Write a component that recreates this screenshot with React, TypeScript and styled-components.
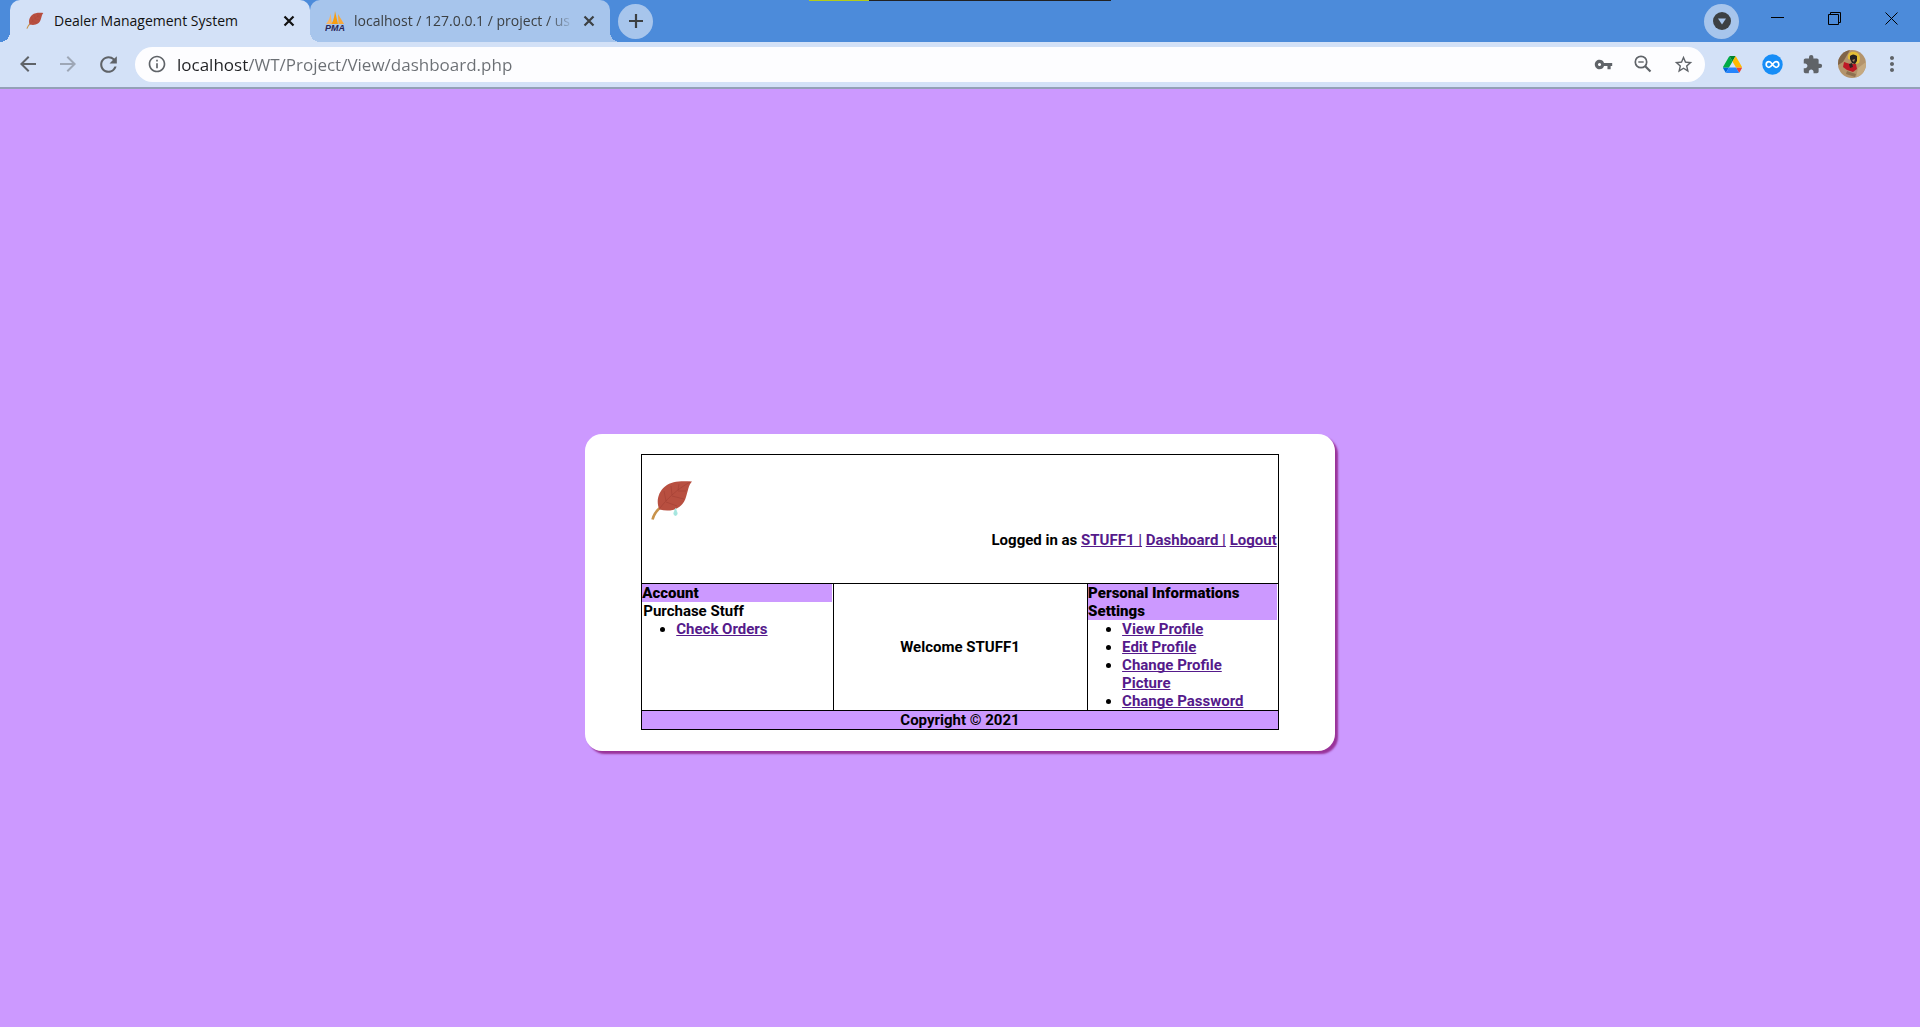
import React from "react";
import styled, { createGlobalStyle } from "styled-components";
import {
  MdArrowBack,
  MdArrowForward,
  MdExtension,
  MdInfoOutline,
  MdMoreVert,
  MdRefresh,
  MdStarBorder,
  MdVpnKey,
} from "react-icons/md";

const colors = {
  frame: "#4c8bda",
  tabActive: "#d3e1f7",
  tabIdle: "#a7c5ec",
  icon: "#5f6368",
  page: "#cc99ff",
  link: "#551a8b",
};

const GlobalStyle = createGlobalStyle`
  *, *::before, *::after { box-sizing: border-box; }
  body { margin: 0; background: ${colors.page}; }
  button { border: 0; padding: 0; background: none; color: inherit; font: inherit; }
`;

const Shell = styled.div`
  display: flex;
  flex-direction: column;
  min-height: 100vh;
`;

/* ---------- browser frame ---------- */

const TabStrip = styled.header`
  position: relative;
  display: flex;
  align-items: stretch;
  height: 42px;
  padding-left: 10px;
  background: ${colors.frame};
  font-family: "Open Sans", "Noto Sans", sans-serif;
`;

const LoadStrip = styled.div`
  position: absolute;
  top: 0;
  left: 0;
  right: 0;
  width: 302px;
  height: 1px;
  margin: 0 auto;
  background: linear-gradient(90deg, #b5cc18 60px, #222 60px);
`;

const Tab = styled.div<{ $active?: boolean }>`
  position: relative;
  z-index: ${(p) => (p.$active ? 1 : 0)};
  display: flex;
  align-items: center;
  width: 300px;
  padding: 0 11px 0 15px;
  border-radius: 10px 10px 0 0;
  background: ${(p) => (p.$active ? colors.tabActive : colors.tabIdle)};
  color: ${(p) => (p.$active ? "#111" : "#3c4043")};

  &::before,
  &::after {
    content: "";
    position: absolute;
    bottom: 0;
    width: 10px;
    height: 10px;
  }
  &::before {
    right: 100%;
    background: radial-gradient(circle at 0 0, transparent 10px, ${(p) => (p.$active ? colors.tabActive : colors.tabIdle)} 10px);
  }
  &::after {
    left: 100%;
    background: radial-gradient(circle at 100% 0, transparent 10px, ${(p) => (p.$active ? colors.tabActive : colors.tabIdle)} 10px);
  }
`;

const TabTitle = styled.span<{ $fade?: boolean }>`
  flex: 1;
  min-width: 0;
  margin: 0 5px 0 9px;
  overflow: hidden;
  white-space: nowrap;
  font-size: 14px;
  line-height: 20px;
  ${(p) => p.$fade && "mask-image: linear-gradient(90deg, #000 calc(100% - 26px), transparent);"}
`;

const TabClose = styled.button`
  display: grid;
  place-items: center;
  width: 20px;
  height: 20px;
`;

const RoundButton = styled.button`
  display: grid;
  place-items: center;
  align-self: center;
  width: 35px;
  height: 35px;
  border-radius: 50%;
  background: ${colors.tabIdle};
`;

const NewTab = styled(RoundButton)`
  margin-left: 8px;
`;

const WindowButtons = styled.div`
  display: flex;
  align-items: stretch;
  margin-left: auto;
`;

const WindowButton = styled.button`
  display: grid;
  place-items: center;
  width: 57px;
  height: 37px;
  svg { fill: none; stroke: #000; }
`;

const WindowGroup = styled.div`
  display: flex;
  margin-left: 10px;
`;

const Toolbar = styled.nav`
  display: flex;
  align-items: center;
  height: 47px;
  padding: 1px 8px 2px;
  border-bottom: 2px solid #93a0b8;
  background: ${colors.tabActive};
  color: ${colors.icon};
`;

const ToolButton = styled.button<{ $muted?: boolean }>`
  display: grid;
  place-items: center;
  flex: none;
  width: 40px;
  height: 35px;
  opacity: ${(p) => (p.$muted ? 0.45 : 1)};
`;

const AddressBar = styled.form`
  display: flex;
  flex: 1;
  align-items: center;
  min-width: 0;
  height: 35px;
  margin: 0 7px;
  padding: 0 2px;
  border-radius: 18px;
  background: #fdfdff;
`;

const AddressInput = styled.input`
  flex: 1;
  min-width: 0;
  height: 35px;
  padding: 0;
  border: 0;
  outline: 0;
  background: linear-gradient(90deg, #202124 71px, #6b6f74 71px);
  background-clip: text;
  -webkit-background-clip: text;
  color: transparent;
  font: 17px "Open Sans", "Noto Sans", sans-serif;
`;

/* ---------- dashboard page ---------- */

const Page = styled.main`
  display: flex;
  flex: 1;
  align-items: center;
  justify-content: center;
  padding-top: 69px;
  background: ${colors.page};
  color: #000;
  font: 700 15px/18px Roboto, "Liberation Sans", sans-serif;
`;

const Card = styled.section`
  display: flex;
  justify-content: center;
  width: 750px;
  max-width: 100%;
  padding: 20px 0 21px;
  border-radius: 17px;
  background: #fff;
  box-shadow: 3px 3px 2px #993399;
`;

const Frame = styled.div`
  width: 85%;
  border: 1px solid #000;
`;

const Banner = styled.header`
  display: flex;
  flex-direction: column;
  gap: 6px;
  padding: 22px 1px 34px 6px;
`;

const Session = styled.p`
  margin: 0;
  text-align: right;
`;

const Columns = styled.div`
  display: grid;
  grid-template-columns: 3fr 4fr 3fr;
  border: solid #000;
  border-width: 1px 0;
`;

const Column = styled.section`
  padding-right: 1px;
  & + & { border-left: 1px solid #000; }
`;

const Heading = styled.h2`
  margin: 0;
  background: ${colors.page};
  font: inherit;
  font-weight: 900;
`;

const Label = styled.p`
  margin: 0;
  padding-left: 1px;
`;

const Menu = styled.ul`
  margin: 0;
  padding: 0 16px 0 34px;
`;

const Link = styled.a`
  color: ${colors.link};
  text-decoration: underline;
  text-decoration-skip-ink: none;
`;

const Welcome = styled(Column)`
  display: grid;
  place-items: center;
`;

const Footer = styled.footer`
  background: ${colors.page};
  text-align: center;
`;

const Leaf = ({ size, drop }: { size: number; drop?: boolean }) => (
  <svg width={size} height={size} viewBox="0 0 48 48" aria-hidden="true">
    <path d="M4.500 42.500C6 37 9 33 13 30" fill="none" stroke="#c8924a" strokeWidth="2.600" />
    <path d="M11.500 32.500C8 26 9.500 15.500 17 9.500C24 4 32 4 44 4.500C40.500 8 40 14 38 20C35 31 24 36 11.500 32.500Z" fill="#b84f40" />
    <path d="M12 31C19 22 28 13 42 5M18 24L16 14M24 18L23 9M30 13L31 7M18 25L29 29M24 19L36 22M30 14L38 14" fill="none" stroke="#9c3b30" strokeWidth="0.800" opacity="0.600" />
    {drop && <path d="M27.500 31.500C27 34 25.500 35.500 26 37.500Q27.500 39.500 29 37.500C29.500 35.500 28 34 27.500 31.500Z" fill="#a5e6df" stroke="#a5e6df" />}
  </svg>
);

const CloseMark = () => (
  <svg width="12" height="12" viewBox="0 0 12 12" aria-hidden="true">
    <path d="M1.500 1.500L10.500 10.500M10.500 1.500L1.500 10.500" stroke="currentColor" strokeWidth="2.200" />
  </svg>
);

const ZoomOutMark = () => (
  <svg width="18" height="18" viewBox="0 0 18 18" fill="none" stroke="currentColor" aria-hidden="true">
    <circle cx="7" cy="7" r="5.700" strokeWidth="1.700" />
    <path d="M11.200 11.200L16.500 16.500" strokeWidth="2.200" />
    <path d="M4.300 7H9.700" strokeWidth="1.400" />
  </svg>
);

const PmaLogo = () => (
  <svg width="20" height="20" viewBox="0 0 20 20" aria-hidden="true">
    <path d="M1 13C4 10 5 6 5.500 2.500L7 13Z" fill="#f7b565" />
    <path d="M6.500 13C9 9 9.500 4 10 0L13 13Z" fill="#f89c0e" />
    <path d="M13 3L19 13H13.500Z" fill="#f7a93b" />
    <text x="10" y="19.500" textAnchor="middle" fontFamily="Liberation Sans, sans-serif" fontSize="9" fontWeight="700" fontStyle="italic" fill="#27275c">PMA</text>
  </svg>
);

const DriveLogo = () => (
  <svg width="19" height="17" viewBox="0 0 87.300 78" aria-hidden="true">
    <path d="m6.600 66.850 3.850 6.650c.8 1.400 1.950 2.500 3.300 3.300l13.750-23.800h-27.500c0 1.550.4 3.100 1.200 4.500z" fill="#0066da" />
    <path d="m43.650 25-13.750-23.800c-1.350.8-2.500 1.900-3.300 3.300l-25.400 44a9.060 9.060 0 0 0-1.200 4.500h27.500z" fill="#00ac47" />
    <path d="m73.550 76.800c1.350-.8 2.500-1.900 3.300-3.300l1.600-2.750 7.650-13.250c.8-1.400 1.200-2.950 1.200-4.500h-27.500l5.850 11.500z" fill="#ea4335" />
    <path d="m43.650 25 13.750-23.800c-1.350-.8-2.900-1.200-4.500-1.200h-18.500c-1.600 0-3.150.45-4.500 1.200z" fill="#00832d" />
    <path d="m59.800 53h-32.300l-13.750 23.800c1.350.8 2.900 1.200 4.500 1.200h50.800c1.600 0 3.150-.45 4.500-1.200z" fill="#2684fc" />
    <path d="m73.400 26.500-12.700-22c-.8-1.400-1.950-2.500-3.300-3.300l-13.750 23.800 16.150 28h27.450c0-1.550-.4-3.100-1.200-4.500z" fill="#ffba00" />
  </svg>
);

const InfinityLogo = () => (
  <svg width="21" height="21" viewBox="0 0 21 21" aria-hidden="true">
    <circle cx="10.500" cy="10.500" r="10.200" fill="#168df7" />
    <path d="M10.500 10.500C9 8.500 8.200 7.700 7 7.700A2.800 2.800 0 0 0 7 13.300C8.200 13.300 9 12.500 10.500 10.500S12.800 7.700 14 7.700A2.800 2.800 0 0 1 14 13.300C12.800 13.300 12 12.500 10.500 10.500Z" fill="none" stroke="#fff" strokeWidth="1.700" />
  </svg>
);

const Avatar = () => (
  <svg width="28" height="28" viewBox="0 0 28 28" aria-hidden="true">
    <defs><clipPath id="avatar"><circle cx="14" cy="14" r="14" /></clipPath></defs>
    <g clipPath="url(#avatar)">
      <rect width="28" height="28" fill="#b3936b" />
      <path d="M0 0H12L5 12L0 15Z" fill="#806448" />
      <path d="M20 18L28 12V24L18 28Z" fill="#c5a980" />
      <path d="M8 24L17 27L18 24L9 21Z" fill="#8e7150" />
      <path d="M10 9C9 3 13 1 17 2C22 3 23 8 21 13L18 14L13 10Z" fill="#e3bd37" />
      <path d="M12 6Q15 3 19 6L19 11L17 14L14 13L12 9Z" fill="#252021" />
      <path d="M14 10L17 9L16 12Z" fill="#a8835b" />
      <path d="M6 12L12 14L18 14L19 19L15 22L9 20L5 17Z" fill="#bd1926" />
      <path d="M11 14L14 13L15 17L12 18Z" fill="#302024" />
    </g>
  </svg>
);

const profileLinks = ["View Profile", "Edit Profile", "Change Profile Picture", "Change Password"];

export default function App() {
  return (
    <Shell>
      <GlobalStyle />
      <TabStrip>
        <Tab $active>
          <Leaf size={20} />
          <TabTitle>Dealer Management System</TabTitle>
          <TabClose aria-label="Close tab"><CloseMark /></TabClose>
        </Tab>
        <Tab>
          <PmaLogo />
          <TabTitle $fade>localhost / 127.0.0.1 / project / us</TabTitle>
          <TabClose aria-label="Close tab"><CloseMark /></TabClose>
        </Tab>
        <NewTab aria-label="New tab">
          <svg width="16" height="16" viewBox="0 0 16 16"><path d="M8 1V15M1 8H15" stroke="#3c4043" strokeWidth="2.200" /></svg>
        </NewTab>
        <WindowButtons>
          <RoundButton aria-label="Search tabs">
            <svg width="18" height="18" viewBox="0 0 18 18">
              <circle cx="9" cy="9" r="9" fill="#3c4043" />
              <path d="M5 6.500H13L9 12.500Z" fill={colors.tabIdle} />
            </svg>
          </RoundButton>
          <WindowGroup>
            <WindowButton aria-label="Minimize"><svg width="13" height="13" viewBox="0 0 13 13"><path d="M0 5.500H13" /></svg></WindowButton>
            <WindowButton aria-label="Restore"><svg width="13" height="13" viewBox="0 0 13 13"><path d="M0.500 2.500H10.500V12.500H0.500ZM2.500 2.500V0.500H12.500V10.500H10.500" /></svg></WindowButton>
            <WindowButton aria-label="Close"><svg width="13" height="13" viewBox="0 0 13 13"><path d="M0.500 0.500L12.500 12.500M12.500 0.500L0.500 12.500" /></svg></WindowButton>
          </WindowGroup>
        </WindowButtons>
        <LoadStrip />
      </TabStrip>

      <Toolbar aria-label="Browser toolbar">
        <ToolButton aria-label="Back"><MdArrowBack size={24} /></ToolButton>
        <ToolButton aria-label="Forward" $muted><MdArrowForward size={24} /></ToolButton>
        <ToolButton aria-label="Reload"><MdRefresh size={25} /></ToolButton>
        <AddressBar onSubmit={(e) => e.preventDefault()}>
          <ToolButton type="button" aria-label="Site information"><MdInfoOutline size={20} /></ToolButton>
          <AddressInput aria-label="Address" defaultValue="localhost/WT/Project/View/dashboard.php" />
          <ToolButton type="button" aria-label="Saved passwords"><MdVpnKey size={19} /></ToolButton>
          <ToolButton type="button" aria-label="Zoom"><ZoomOutMark /></ToolButton>
          <ToolButton type="button" aria-label="Bookmark"><MdStarBorder size={21} /></ToolButton>
        </AddressBar>
        <ToolButton aria-label="Drive"><DriveLogo /></ToolButton>
        <ToolButton aria-label="Infinity extension"><InfinityLogo /></ToolButton>
        <ToolButton aria-label="Extensions"><MdExtension size={21} /></ToolButton>
        <ToolButton aria-label="Profile"><Avatar /></ToolButton>
        <ToolButton aria-label="Menu"><MdMoreVert size={24} /></ToolButton>
      </Toolbar>

      <Page>
        <Card>
          <Frame>
            <Banner>
              <Leaf size={48} drop />
              <Session>
                Logged in as <Link href="#profile">STUFF1 |</Link> <Link href="#dashboard">Dashboard |</Link>{" "}
                <Link href="#logout">Logout</Link>
              </Session>
            </Banner>
            <Columns>
              <Column>
                <Heading>Account</Heading>
                <Label>Purchase Stuff</Label>
                <Menu><li><Link href="#orders">Check Orders</Link></li></Menu>
              </Column>
              <Welcome>Welcome STUFF1</Welcome>
              <Column>
                <Heading>Personal Informations Settings</Heading>
                <Menu>
                  {profileLinks.map((name) => (
                    <li key={name}><Link href="#settings">{name}</Link></li>
                  ))}
                </Menu>
              </Column>
            </Columns>
            <Footer>Copyright © 2021</Footer>
          </Frame>
        </Card>
      </Page>
    </Shell>
  );
}
